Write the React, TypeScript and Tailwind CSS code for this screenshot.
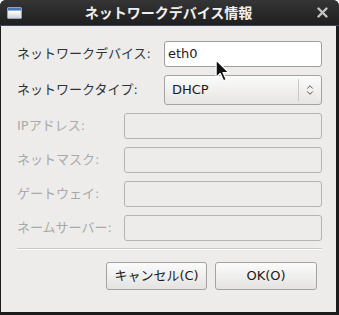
import { ChevronDown, ChevronUp } from 'lucide-react';

const font = { fontFamily: '"DejaVu Sans", "Noto Sans CJK JP", sans-serif' };

function WindowIcon() {
  return (
    <svg width="15" height="12" viewBox="0 0 15 12">
      <rect x="0.5" y="0.5" width="14" height="11" rx="1" fill="#e8e8e8" stroke="#9aa4b4" />
      <rect x="1" y="1" width="13" height="2.5" fill="#4a78c0" />
      <rect x="1.5" y="4" width="12" height="7" fill="url(#g)" />
      <defs>
        <linearGradient id="g" x1="0" y1="0" x2="0" y2="1">
          <stop offset="0" stopColor="#ffffff" />
          <stop offset="1" stopColor="#cfd3d8" />
        </linearGradient>
      </defs>
    </svg>
  );
}

function Cursor() {
  return (
    <svg width="16" height="24" viewBox="0 0 14 21" className="absolute left-[215px] top-[59px]">
      <path
        d="M1 1 L1 16 L4.5 12.5 L7.5 19 L9.8 18 L7 11.8 L12 11.8 Z"
        fill="#111"
        stroke="#fff"
        strokeWidth="1"
        strokeLinejoin="round"
      />
    </svg>
  );
}

function DisabledRow({ label }: { label: string }) {
  return (
    <div className="flex items-center h-[26px]">
      <span className="flex-1 text-[13px] text-[#a9a9a7]">{label}</span>
      <div className="w-[198px] h-[26px] rounded-[3px] border border-[#b4b4b2] bg-[#edeceb]" />
    </div>
  );
}

export default function App() {
  return (
    <div
      className="relative w-[339px] h-[315px] bg-[#1c1c1c] rounded-t-[6px] flex flex-col overflow-hidden"
      style={font}
    >
      {/* Title bar */}
      <div className="h-[26px] flex items-center px-[7px] bg-gradient-to-b from-[#353535] to-[#1f1f1f] border-b border-[#3d4a5c]">
        <WindowIcon />
        <span className="flex-1 text-center text-[14px] font-bold text-[#f0f0f0] leading-none pr-[2px]">
          ネットワークデバイス情報
        </span>
        <svg width="11" height="11" viewBox="0 0 11 11" className="mr-[4px]">
          <path d="M1.5 1.5 L9.5 9.5 M9.5 1.5 L1.5 9.5" stroke="#c4c4c4" strokeWidth="2.4" strokeLinecap="round" />
        </svg>
      </div>

      {/* Body */}
      <div className="flex-1 ml-[1px] mr-[3px] mb-[3px] bg-[#edeceb] pt-[15px] pl-[16px] pr-[14px] flex flex-col">
        <div className="flex flex-col gap-[8px]">
          <div className="flex items-center h-[26px]">
            <span className="flex-1 text-[13px] text-[#2e3436]">ネットワークデバイス:</span>
            <div className="w-[158px] h-[26px] rounded-[3px] border border-[#9d9d9b] bg-white flex items-center pl-[3px] text-[13px] text-[#1a1a1a]">
              eth0
            </div>
          </div>
          <div className="flex items-center h-[30px]">
            <span className="flex-1 text-[13px] text-[#2e3436]">ネットワークタイプ:</span>
            <div className="w-[158px] h-[30px] rounded-[3px] border border-[#a3a3a1] bg-gradient-to-b from-[#fbfbfb] to-[#e6e5e3] flex items-center text-[13px] text-[#1a1a1a]">
              <span className="flex-1 pl-[7px]">DHCP</span>
              <div className="w-px h-[22px] bg-[#c8c8c6]" />
              <div className="w-[22px] flex flex-col items-center -space-y-[4px]">
                <ChevronUp size={10} strokeWidth={2} color="#333" />
                <ChevronDown size={10} strokeWidth={2} color="#333" />
              </div>
            </div>
          </div>
          <DisabledRow label="IPアドレス:" />
          <DisabledRow label="ネットマスク:" />
          <DisabledRow label="ゲートウェイ:" />
          <DisabledRow label="ネームサーバー:" />
        </div>

        <div className="mt-[7px] border-t border-[#c9c8c6] border-b border-b-white" />

        <div className="mt-[12px] flex justify-end gap-[8px] pr-[5px]">
          <button className="w-[101px] h-[28px] rounded-[3px] border border-[#a3a3a1] bg-gradient-to-b from-[#fbfbfb] to-[#e4e3e1] text-[13px] text-[#1a1a1a]">
            キャンセル(C)
          </button>
          <button className="w-[102px] h-[28px] rounded-[3px] border border-[#a3a3a1] bg-gradient-to-b from-[#fbfbfb] to-[#e4e3e1] text-[13px] text-[#1a1a1a]">
            OK(O)
          </button>
        </div>
      </div>

      <Cursor />
    </div>
  );
}
